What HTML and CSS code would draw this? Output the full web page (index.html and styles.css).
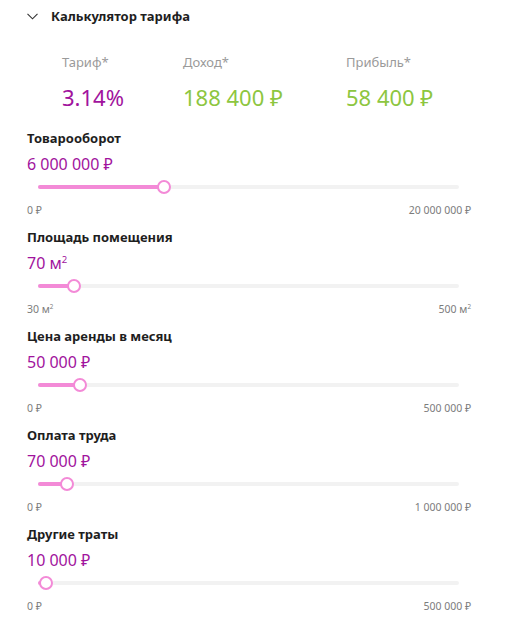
FILE: index.html
```html
<!DOCTYPE html>
<html lang="ru">
<head>
<meta charset="utf-8">
<link rel="stylesheet" href="styles.css">
</head>
<body>
<div class="calc">
  <div class="head">
    <svg class="chev" width="11" height="7" viewBox="0 0 11 7"><path d="M0.5 0.8 L5.5 5.8 L10.5 0.8" fill="none" stroke="#333" stroke-width="1.1"/></svg>
    <span class="head-title">Калькулятор тарифа</span>
  </div>
  <div class="stats">
    <div class="stat"><div class="stat-label">Тариф*</div><div class="stat-value purple">3.14%</div></div>
    <div class="stat"><div class="stat-label">Доход*</div><div class="stat-value green">188 400 ₽</div></div>
    <div class="stat"><div class="stat-label">Прибыль*</div><div class="stat-value green">58 400 ₽</div></div>
  </div>

  <div class="field">
    <div class="field-title">Товарооборот</div>
    <div class="field-value">6 000 000 ₽</div>
    <div class="slider"><div class="track"><div class="fill" style="width:30%"></div><div class="thumb" style="left:30%"></div></div></div>
    <div class="range"><span>0 ₽</span><span>20 000 000 ₽</span></div>
  </div>

  <div class="field">
    <div class="field-title">Площадь помещения</div>
    <div class="field-value">70 м<sup>2</sup></div>
    <div class="slider"><div class="track"><div class="fill" style="width:8.5%"></div><div class="thumb" style="left:8.5%"></div></div></div>
    <div class="range"><span>30 м<sup>2</sup></span><span>500 м<sup>2</sup></span></div>
  </div>

  <div class="field">
    <div class="field-title">Цена аренды в месяц</div>
    <div class="field-value">50 000 ₽</div>
    <div class="slider"><div class="track"><div class="fill" style="width:10%"></div><div class="thumb" style="left:10%"></div></div></div>
    <div class="range"><span>0 ₽</span><span>500 000 ₽</span></div>
  </div>

  <div class="field">
    <div class="field-title">Оплата труда</div>
    <div class="field-value">70 000 ₽</div>
    <div class="slider"><div class="track"><div class="fill" style="width:7%"></div><div class="thumb" style="left:7%"></div></div></div>
    <div class="range"><span>0 ₽</span><span>1 000 000 ₽</span></div>
  </div>

  <div class="field">
    <div class="field-title">Другие траты</div>
    <div class="field-value">10 000 ₽</div>
    <div class="slider"><div class="track"><div class="fill" style="width:2%"></div><div class="thumb" style="left:2%"></div></div></div>
    <div class="range"><span>0 ₽</span><span>500 000 ₽</span></div>
  </div>
</div>
</body>
</html>
```
FILE: styles.css
```css
* { box-sizing: border-box; }
body {
  margin: 0;
  background: #fff;
  font-family: "Noto Sans", "Open Sans", sans-serif;
  color: #222;
}
.calc {
  width: 509px;
  padding: 6px 38px 0 27px;
}
.head {
  display: flex;
  align-items: center;
  height: 20px;
  gap: 13px;
}
.chev { display: block; margin-top: 1px; }
.head-title {
  font-size: 13px;
  font-weight: 700;
  line-height: 20px;
  color: #1e1e1e;
}
.stats {
  display: grid;
  grid-template-columns: 121px 163px auto;
  padding-left: 35px;
  margin-top: 27px;
}
.stat-label {
  font-size: 13px;
  line-height: 18px;
  color: #9a9a9a;
}
.stat-value {
  font-size: 22px;
  line-height: 30px;
  margin-top: 11px;
}
.purple { color: #a1139d; }
.green { color: #8dc63f; }
.field {
  margin-top: 11px;
}
.stats + .field { margin-top: 17px; }
.field-title {
  font-size: 13px;
  font-weight: 700;
  line-height: 18px;
  color: #1e1e1e;
}
.field-value {
  margin-top: 5px;
  font-size: 16px;
  line-height: 24px;
  color: #a1139d;
}
.field-value sup, .range sup {
  font-size: 0.6em;
  line-height: 0;
  vertical-align: 0.6em;
}
.slider {
  height: 22px;
  display: flex;
  align-items: center;
  padding: 0 12px 0 11px;
}
.track {
  position: relative;
  flex: 1;
  height: 4px;
  border-radius: 2px;
  background: #f2f2f2;
}
.fill {
  height: 4px;
  border-radius: 2px;
  background: #f38ad7;
}
.thumb {
  position: absolute;
  top: 50%;
  width: 14px;
  height: 14px;
  margin: -7px 0 0 -7px;
  border: 2px solid #f38ad7;
  border-radius: 50%;
  background: #fff;
}
.range {
  display: flex;
  justify-content: space-between;
  margin-top: 5px;
  font-size: 10.5px;
  line-height: 14px;
  color: #7c7c7c;
}
```
